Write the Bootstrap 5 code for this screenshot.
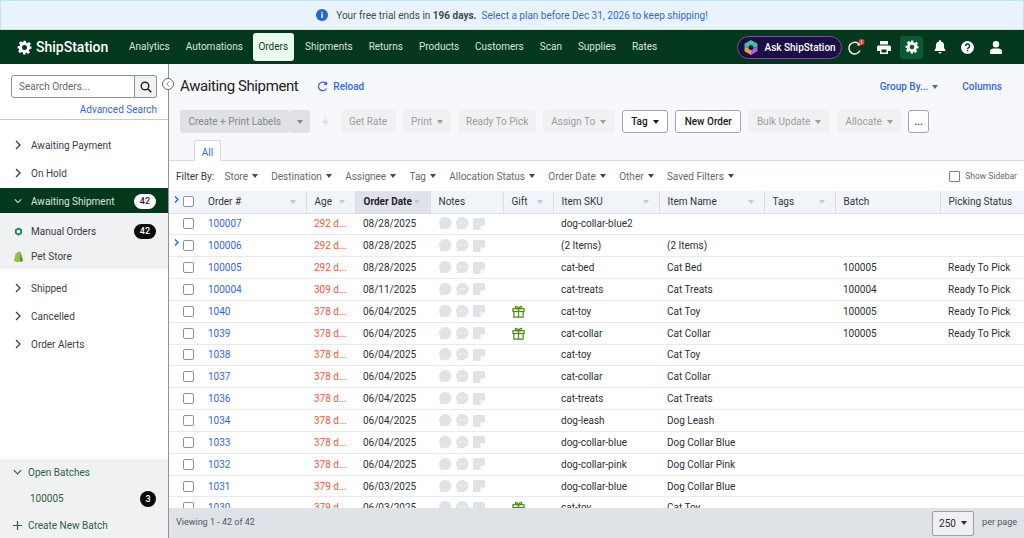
<!DOCTYPE html>
<html lang="en">
<head>
<meta charset="UTF-8">
<meta name="viewport" content="width=device-width, initial-scale=1">
<link href="https://cdn.jsdelivr.net/npm/bootstrap@5.3.2/dist/css/bootstrap.min.css" rel="stylesheet">
<script src="https://cdn.jsdelivr.net/npm/bootstrap@5.3.2/dist/js/bootstrap.bundle.min.js"></script>
<title>ShipStation - Awaiting Shipment</title>
<style>
html, body { height: 538px; overflow: hidden; }
body { font-family: Roboto, "Liberation Sans", sans-serif; font-size: 10px; color: #2b2f33; background: #fff; }
a { text-decoration: none; }
.trial-bar { height: 30px; background: #e9f3fb; border: 1px solid #c3e3f7; font-size: 10px; color: #46494d; gap: 8px; flex: none; }
.trial-bar a, .blue-link { color: #3467e0; }
.ss-nav { height: 34px; background: #03381c; padding: 0 0 0 17px; flex: none; flex-wrap: nowrap; }
.ss-brand { color: #fff; font-size: 14px; font-weight: 500; width: 106px; gap: 4px; }
.ss-links .nav-link { color: #dbe6de; font-size: 10px; padding: 0 6px; height: 28px; line-height: 28px; margin-right: 4px; border-radius: 3px; }
.ss-links .nav-link.active { background: #e9fbef; color: #0c3b22; margin: 0 5px 0 0; padding: 0 6px 0 5.500px; }
.ask-pill { width: 105px; height: 23px; border-radius: 12px; background: #1c0d45; border: 1px solid #6e5a90; color: #fff; font-size: 10px; font-weight: 500; gap: 7px; padding-left: 6px; white-space: nowrap; flex: none; }
.nav-tools { width: 28px; height: 23px; position: relative; flex: none; }
.nav-tools.current { background: #0c5a34; border-radius: 3px; width: 23px; margin: 0 2.5px; }
.nav-right { margin-right: 14.5px; }
.body-split { min-height: 0; }
.side-panel { width: 169px; flex: none; border-right: 1px solid #8f9398; background: #fff; position: relative; }
.search-box { padding: 11px 11px 0; height: 56px; border-bottom: 1px solid #c6c9cd; flex: none; }
.search-box .input-group { height: 23px; }
.search-box .form-control { font-size: 10px; padding: 0 7px; border-color: #8e9296; color: #555; border-radius: 3px 0 0 3px; min-height: 0; }
.search-box .form-control::placeholder { color: #666; }
.search-btn { width: 23px; padding: 0; background: #f0f2f4; border: 1px solid #8e9296; border-left-color: #c6c9cd; border-radius: 0 3px 3px 0; flex: none; }
.adv-link { display: block; text-align: right; margin-top: 5px; line-height: 13px; }
.collapse-dot { position: absolute; top: 14px; right: -6px; width: 12px; height: 12px; border: 1px solid #666; border-radius: 50%; background: #fff; z-index: 5; }
.side-row { height: 28px; padding-left: 14px; gap: 9px; color: #3b3e42; }
.side-row.first { margin-top: 11px; }
.side-row.selected { height: 25px; margin-top: 1px; padding-top: 1px; background: #03381c; color: #dbe6de; padding-right: 12px; }
.side-sub { background: #f0f1f3; height: 56px; padding-top: 6px; margin-bottom: 5px; }
.side-sub .side-row { height: 25px; padding-right: 12px; gap: 8px; }
.pill-count { min-width: 22px; padding: 0 6px; height: 15px; line-height: 15px; font-size: 9px; font-weight: 500; border-radius: 8px; background: #0a0a0a; color: #fff; text-align: center; }
.pill-count.round { min-width: 16px; height: 16px; line-height: 16px; padding: 0; }
.selected .pill-count { background: #fff; color: #222; }
.batch-box { height: 79px; background: #f0f1f3; flex: none; }
.batch-box .side-row { height: 26.5px; padding-right: 12px; gap: 6px; padding-left: 13px; color: #2f5f46; }
.batch-box .batch-num { padding-left: 30px; color: #2f5f46; }
.main-area { min-width: 0; background: #f7f8fb; }
.title-row { height: 45px; padding: 0 22px 0 11px; flex: none; }
.page-title { font-size: 15px; font-weight: 400; margin: 0 19px 0 0; color: #222; font-family: Roboto, sans-serif; line-height: 1; letter-spacing: -.4px; }
.reload-link { gap: 5px; }
.title-link { font-weight: 500; }
.tool-row { height: 25px; padding-left: 11px; gap: 7px; flex: none; }
.tool-btn { height: 23px; padding: 0 8.5px; font-size: 10px; border-radius: 3px; display: inline-flex; align-items: center; gap: 5px; white-space: nowrap; }
.tool-btn.off { background: #f0f1f3; border: 0; color: #9a9da1; }
.tool-btn.on { background: #fff; border: 1px solid #a3a6aa; color: #17191b; font-weight: 500; }
.tool-btn.dark-off { background: #dfe1e4; border: 0; color: #85888c; }
.tool-btn.tight { padding: 0 7.5px; }
.tool-btn.square { width: 20px; padding: 0; justify-content: center; }
.tool-btn.dots { width: 21px; padding: 0; justify-content: center; }
.split-btn { gap: 0; }
.caret-down { width: 0; height: 0; border-left: 3.5px solid transparent; border-right: 3.5px solid transparent; border-top: 4px solid currentColor; display: inline-block; flex: none; }
.tab-row { height: 27px; padding-left: 25px; border-bottom: 1px solid #d5dae4; flex: none; display: flex; align-items: flex-end; }
.tab-all { width: 27px; height: 21px; background: #fff; border: 1px solid #d5dae4; border-bottom: 0; border-radius: 3px 3px 0 0; color: #3467e0; text-align: center; line-height: 24px; margin-bottom: -1px; position: relative; }
.filter-row { height: 30px; background: #fff; padding: 0 7px; flex: none; color: #666a6e; gap: 13.3px; }
.filter-row .lead-in { color: #33363a; margin-right: -3px; }
.filter-row span.fl { display: inline-flex; align-items: center; gap: 4px; }
.filter-row .caret-down { color: #44474a; }
.side-check { font-size: 8.5px; gap: 5px; }
.side-check .form-check-input { width: 11px; height: 11px; margin: 0; border-color: #7d8186; border-radius: 1px; }
.table-wrap { flex: 1; min-height: 0; overflow: hidden; background: #fff; position: relative; }
.order-grid { table-layout: fixed; width: 855px; margin: 0; font-size: 10px; color: #2b2f33; }
.order-grid th, .order-grid td { padding: 0 0 0 8px; height: 21.85px; vertical-align: middle; white-space: nowrap; overflow: hidden; border-bottom: 1px solid #e8eaec; box-shadow: none; }
.order-grid th { height: 22px; background: #f1f4f8; font-weight: 400; border-bottom: 1px solid #d9dee5; border-right: 1px solid #d9dee5; position: relative; color: #33363a; }
.order-grid th.sorted { background: #dfe3e9; font-weight: 700; color: #1f2124; }
.order-grid th .caret-down { position: absolute; right: 10px; top: 9px; color: #c5c9ce; }
.order-grid th.chk-cell { border-right: 0; }
.order-grid .chk-cell { padding-left: 14px; }
.order-grid .form-check-input { width: 11px; height: 11px; margin: 0; border: 1px solid #8d9298; border-radius: 2px; display: block; }
.order-grid td a { color: #3467e0; }
.age-late { color: #f0563a; }
.cw-chk { width: 31px; } .cw-ord { width: 106px; } .cw-age { width: 49px; } .cw-date { width: 75px; }
.cw-notes { width: 73px; } .cw-gift { width: 50px; } .cw-sku { width: 106px; } .cw-name { width: 105px; }
.cw-tags { width: 71px; } .cw-batch { width: 105px; } .cw-pick { width: 84px; }
.row-arrow { position: absolute; left: 5px; width: 5px; height: 7px; z-index: 2; }
.arrow-head { top: 5px; }
.arrow-two { top: 48px; }
.note-icons { display: flex; gap: 4px; align-items: center; margin-left: 1px; }
.gift-icon { margin-left: 1px; display: block; }
.grid-foot { height: 30px; background: #dfe2e6; padding: 0 7px; color: #53575b; flex: none; font-size: 9px; }
.page-select { width: 42px; height: 25px; border: 1px solid #9b9ea2; border-radius: 2px; background: #eef0f2; padding: 0 6px; color: #2a2c2f; margin-right: 8px; justify-content: space-between; font-size: 10px; }
</style>
</head>
<body class="d-flex flex-column">
<svg width="0" height="0" class="position-absolute">
  <symbol id="gear" viewBox="0 0 24 24"><path fill="currentColor" fill-rule="evenodd" d="M10 1h4l.7 3.2 1.9.8 2.8-1.8 2.8 2.8-1.8 2.8.8 1.9L23 10v4l-3.2.7-.8 1.9 1.8 2.8-2.8 2.8-2.8-1.8-1.9.8L14 23h-4l-.7-3.2-1.9-.8-2.8 1.8-2.8-2.8 1.8-2.8-.8-1.9L1 14v-4l3.2-.7.8-1.9-1.800-2.800 2.800-2.800 2.800 1.800 1.900-.8zM12 8a4 4 0 1 0 0 8 4 4 0 0 0 0-8z"/></symbol>
  <symbol id="ring" viewBox="0 0 24 24"><path fill="currentColor" fill-rule="evenodd" d="M12 1l9.500 5.500v11L12 23l-9.500-5.500v-11zM12 7a5 5 0 1 0 0 10 5 5 0 0 0 0-10z"/></symbol>
  <symbol id="chev-r" viewBox="0 0 8 10"><path d="M2 1l4 4-4 4" fill="none" stroke="currentColor" stroke-width="1.300"/></symbol>
  <symbol id="chev-d" viewBox="0 0 10 8"><path d="M1 2l4 4 4-4" fill="none" stroke="currentColor" stroke-width="1.300"/></symbol>
  <symbol id="bubble" viewBox="0 0 14 14"><path fill="#dfe2e6" d="M7 0a6.500 6.500 0 1 1-2.800 12.400L.8 13.800l1-3A6.500 6.500 0 0 1 7 0z"/></symbol>
  <symbol id="bubble-dots" viewBox="0 0 14 14"><path fill="#dfe2e6" d="M7 0a6.500 6.500 0 1 1-2.800 12.400L.8 13.800l1-3A6.500 6.500 0 0 1 7 0z"/><circle cx="4.300" cy="6.500" r=".8" fill="#fff"/><circle cx="7" cy="6.500" r=".8" fill="#fff"/><circle cx="9.700" cy="6.500" r=".8" fill="#fff"/></symbol>
  <symbol id="sticky" viewBox="0 0 12 12"><path fill="#dfe2e6" d="M1.500 0h9A1.500 1.500 0 0 1 12 1.500V7l-5 5H1.500A1.500 1.500 0 0 1 0 10.500v-9A1.500 1.500 0 0 1 1.500 0z"/><path fill="#fff" d="M7.500 11V7.500H11V8L8 11z"/></symbol>
  <symbol id="gift" viewBox="0 0 14 14"><g fill="none" stroke="#4f8a10" stroke-width="1.300"><rect x="1" y="4" width="12" height="3"/><path d="M2 7v6h10V7M7 4v9M7 4C5 4 3.500 3.500 3.500 2.200 3.500 1 5.500.6 7 4zM7 4c2 0 3.500-.5 3.500-1.800C10.500 1 8.500.6 7 4z"/></g></symbol>
</svg>

<div class="trial-bar d-flex align-items-center justify-content-center">
  <svg width="12" height="12" viewBox="0 0 12 12"><circle cx="6" cy="6" r="6" fill="#2463d8"/><rect x="5.300" y="5" width="1.500" height="4" fill="#fff"/><rect x="5.300" y="2.800" width="1.500" height="1.500" fill="#fff"/></svg>
  <span>Your free trial ends in <b>196 days.</b>&nbsp; <a href="#">Select a plan before Dec 31, 2026 to keep shipping!</a></span>
</div>

<nav class="navbar ss-nav d-flex align-items-center">
  <a class="d-flex align-items-center ss-brand" href="#"><svg width="15" height="15"><use href="#gear"/></svg>ShipStation</a>
  <div class="nav ss-links align-items-center flex-nowrap">
    <a class="nav-link" href="#">Analytics</a>
    <a class="nav-link" href="#">Automations</a>
    <a class="nav-link active" href="#">Orders</a>
    <a class="nav-link" href="#">Shipments</a>
    <a class="nav-link" href="#">Returns</a>
    <a class="nav-link" href="#">Products</a>
    <a class="nav-link" href="#">Customers</a>
    <a class="nav-link" href="#">Scan</a>
    <a class="nav-link" href="#">Supplies</a>
    <a class="nav-link" href="#">Rates</a>
  </div>
  <div class="ms-auto d-flex align-items-center text-white nav-right">
    <div class="ask-pill d-flex align-items-center">
      <svg width="14" height="15" viewBox="0 0 14 15"><path fill="#35c8a0" d="M7 0l6.500 3.700v3.800H9.500a2.500 2.500 0 0 0-5 0H.5V3.700z"/><path fill="#e8a13c" d="M.5 7.500h4a2.500 2.500 0 0 0 2.500 2.500v5L.5 11.300z"/><path fill="#b05cd6" d="M13.500 7.500h-4A2.500 2.500 0 0 1 7 10v5l6.500-3.700z"/></svg>
      Ask ShipStation
    </div>
    <div class="nav-tools d-flex align-items-center justify-content-center">
      <svg width="18" height="17" viewBox="0 0 18 17"><path d="M13 11.500A5.800 5.800 0 1 1 11.800 5" fill="none" stroke="#fff" stroke-width="1.400"/><path d="M13.300 3v3.500H9.800z" fill="#fff"/><circle cx="14.500" cy="3" r="3" fill="#ea4b2c"/><rect x="14.100" y="1.300" width=".8" height="2.200" fill="#fff"/><rect x="14.100" y="3.900" width=".8" height=".8" fill="#fff"/></svg>
    </div>
    <div class="nav-tools d-flex align-items-center justify-content-center">
      <svg width="14" height="13" viewBox="0 0 14 13"><path fill="#fff" fill-rule="evenodd" d="M3 0h8v3.500H3zM1.500 4.500h11A1.500 1.500 0 0 1 14 6v4h-3v3H3v-3H0V6a1.500 1.500 0 0 1 1.500-1.500zM4.500 8.500V11.500h5V8.500z"/></svg>
    </div>
    <div class="nav-tools current d-flex align-items-center justify-content-center"><svg width="14" height="14"><use href="#gear"/></svg></div>
    <div class="nav-tools d-flex align-items-center justify-content-center">
      <svg width="12" height="14" viewBox="0 0 12 14"><path fill="#fff" d="M6 0a1 1 0 0 1 1 1v.6A4 4 0 0 1 10 5.500c0 3 .6 4 2 5.500H0c1.400-1.500 2-2.500 2-5.500A4 4 0 0 1 5 1.600V1a1 1 0 0 1 1-1zM4.500 12h3a1.500 1.500 0 0 1-3 0z"/></svg>
    </div>
    <div class="nav-tools d-flex align-items-center justify-content-center">
      <svg width="13" height="13" viewBox="0 0 13 13"><circle cx="6.500" cy="6.500" r="6.500" fill="#fff"/><path d="M4.600 5a2 2 0 1 1 2.800 1.800c-.6.300-.9.600-.9 1.300" fill="none" stroke="#03381c" stroke-width="1.400"/><rect x="5.800" y="9" width="1.400" height="1.400" fill="#03381c"/></svg>
    </div>
    <div class="nav-tools d-flex align-items-center justify-content-center">
      <svg width="12" height="13" viewBox="0 0 12 13"><circle cx="6" cy="3.300" r="3.200" fill="#fff"/><path fill="#fff" d="M0 13v-2.500C0 8.500 2 7.500 3.500 7.500h5c1.500 0 3.500 1 3.500 3V13z"/></svg>
    </div>
  </div>
</nav>

<div class="d-flex flex-grow-1 body-split">
  <aside class="side-panel d-flex flex-column">
    <span class="collapse-dot d-flex align-items-center justify-content-center"><svg width="6" height="6" viewBox="0 0 8 10" class="text-secondary"><path d="M6 1L2 5l4 4" fill="none" stroke="currentColor" stroke-width="1.500"/></svg></span>
    <div class="search-box">
      <div class="input-group flex-nowrap">
        <input class="form-control" type="text" placeholder="Search Orders...">
        <button class="search-btn d-flex align-items-center justify-content-center" type="button">
          <svg width="12" height="12" viewBox="0 0 12 12"><circle cx="5" cy="5" r="3.800" fill="none" stroke="#222" stroke-width="1.400"/><path d="M8 8l3.300 3.300" stroke="#222" stroke-width="1.600"/></svg>
        </button>
      </div>
      <a class="adv-link blue-link" href="#">Advanced Search</a>
    </div>
    <div class="side-row first d-flex align-items-center"><svg width="8" height="10"><use href="#chev-r"/></svg>Awaiting Payment</div>
    <div class="side-row d-flex align-items-center"><svg width="8" height="10"><use href="#chev-r"/></svg>On Hold</div>
    <div class="side-row selected d-flex align-items-center"><svg width="8" height="10"><use href="#chev-d"/></svg>Awaiting Shipment<span class="pill-count ms-auto">42</span></div>
    <div class="side-sub">
      <div class="side-row d-flex align-items-center"><svg width="9" height="9" class="text-success"><use href="#ring"/></svg>Manual Orders<span class="pill-count ms-auto">42</span></div>
      <div class="side-row d-flex align-items-center"><svg width="9" height="11" viewBox="0 0 9 11"><path fill="#95bf47" d="M1.500 2.500L3 2C3.500.5 5 0 6 .8L7 1.500 9 10l-6.500 1L0 10z"/><path fill="#5e8e3e" d="M6.500 1.500L9 10l-3 1z"/></svg>Pet Store</div>
    </div>
    <div class="side-row d-flex align-items-center"><svg width="8" height="10"><use href="#chev-r"/></svg>Shipped</div>
    <div class="side-row d-flex align-items-center"><svg width="8" height="10"><use href="#chev-r"/></svg>Cancelled</div>
    <div class="side-row d-flex align-items-center"><svg width="8" height="10"><use href="#chev-r"/></svg>Order Alerts</div>
    <div class="batch-box mt-auto">
      <div class="side-row d-flex align-items-center"><svg width="9" height="8"><use href="#chev-d"/></svg>Open Batches</div>
      <div class="side-row batch-num d-flex align-items-center"><span>100005</span><span class="pill-count round ms-auto">3</span></div>
      <div class="side-row d-flex align-items-center"><svg width="9" height="9" viewBox="0 0 9 9"><path d="M4.500 0v9M0 4.500h9" stroke="currentColor" stroke-width="1.200"/></svg>Create New Batch</div>
    </div>
  </aside>

  <main class="main-area flex-grow-1 d-flex flex-column">
    <div class="title-row d-flex align-items-center">
      <h1 class="page-title">Awaiting Shipment</h1>
      <a class="blue-link reload-link title-link d-flex align-items-center" href="#"><svg width="11" height="11" viewBox="0 0 11 11"><path d="M9.500 7.500A4.300 4.300 0 1 1 8.800 2.300M9.500.8v2.500H7" fill="none" stroke="#3467e0" stroke-width="1.300"/></svg>Reload</a>
      <a class="blue-link title-link ms-auto d-flex align-items-center gap-1" href="#">Group By... <span class="caret-down"></span></a>
      <a class="blue-link title-link ms-4" href="#">Columns</a>
    </div>
    <div class="tool-row d-flex align-items-center">
      <div class="split-btn d-flex">
        <button class="btn tool-btn dark-off">Create + Print Labels</button>
        <button class="btn tool-btn dark-off square"><span class="caret-down"></span></button>
      </div>
      <svg width="9" height="12" viewBox="0 0 10 12" class="mx-1"><path fill="#dfe1e4" d="M6 0L1 7h3l-1 5 6-7H5.500z"/></svg>
      <button class="btn tool-btn off">Get Rate</button>
      <button class="btn tool-btn off">Print <span class="caret-down"></span></button>
      <button class="btn tool-btn off tight">Ready To Pick</button>
      <button class="btn tool-btn off">Assign To <span class="caret-down"></span></button>
      <button class="btn tool-btn on">Tag <span class="caret-down"></span></button>
      <button class="btn tool-btn on">New Order</button>
      <button class="btn tool-btn off">Bulk Update <span class="caret-down"></span></button>
      <button class="btn tool-btn off">Allocate <span class="caret-down"></span></button>
      <button class="btn tool-btn on dots">...</button>
    </div>
    <div class="tab-row"><a class="tab-all" href="#">All</a></div>
    <div class="filter-row d-flex align-items-center">
      <span class="lead-in">Filter By:</span>
      <span class="fl">Store <i class="caret-down"></i></span>
      <span class="fl">Destination <i class="caret-down"></i></span>
      <span class="fl">Assignee <i class="caret-down"></i></span>
      <span class="fl">Tag <i class="caret-down"></i></span>
      <span class="fl">Allocation Status <i class="caret-down"></i></span>
      <span class="fl">Order Date <i class="caret-down"></i></span>
      <span class="fl">Other <i class="caret-down"></i></span>
      <span class="fl">Saved Filters <i class="caret-down"></i></span>
      <label class="side-check ms-auto d-flex align-items-center"><input class="form-check-input" type="checkbox">Show Sidebar</label>
    </div>
    <div class="table-wrap">
      <svg class="row-arrow arrow-head" viewBox="0 0 5 7"><path d="M1 .5l3 3-3 3" fill="none" stroke="#2463d8" stroke-width="1.300"/></svg>
      <svg class="row-arrow arrow-two" viewBox="0 0 5 7"><path d="M1 .5l3 3-3 3" fill="none" stroke="#2463d8" stroke-width="1.300"/></svg>
      <table class="table order-grid">
        <colgroup>
          <col class="cw-chk"><col class="cw-ord"><col class="cw-age"><col class="cw-date"><col class="cw-notes"><col class="cw-gift"><col class="cw-sku"><col class="cw-name"><col class="cw-tags"><col class="cw-batch"><col class="cw-pick">
        </colgroup>
        <thead>
          <tr>
            <th class="chk-cell"><input class="form-check-input" type="checkbox"></th>
            <th>Order #<span class="caret-down"></span></th>
            <th>Age<span class="caret-down"></span></th>
            <th class="sorted">Order Date<span class="caret-down"></span></th>
            <th>Notes</th>
            <th>Gift<span class="caret-down"></span></th>
            <th>Item SKU<span class="caret-down"></span></th>
            <th>Item Name<span class="caret-down"></span></th>
            <th>Tags<span class="caret-down"></span></th>
            <th>Batch</th>
            <th>Picking Status</th>
          </tr>
        </thead>
        <tbody id="orderRows"></tbody>
      </table>
    </div>
    <div class="grid-foot d-flex align-items-center">
      <span>Viewing 1 - 42 of 42</span>
      <div class="page-select ms-auto d-flex align-items-center">250 <span class="caret-down"></span></div>
      <span>per page</span>
    </div>
  </main>
</div>

<script>
  const orders = [
    ['100007', '292 d...', '08/28/2025', 0, 'dog-collar-blue2', '', '', ''],
    ['100006', '292 d...', '08/28/2025', 0, '(2 Items)', '(2 Items)', '', ''],
    ['100005', '292 d...', '08/28/2025', 0, 'cat-bed', 'Cat Bed', '100005', 'Ready To Pick'],
    ['100004', '309 d...', '08/11/2025', 0, 'cat-treats', 'Cat Treats', '100004', 'Ready To Pick'],
    ['1040', '378 d...', '06/04/2025', 1, 'cat-toy', 'Cat Toy', '100005', 'Ready To Pick'],
    ['1039', '378 d...', '06/04/2025', 1, 'cat-collar', 'Cat Collar', '100005', 'Ready To Pick'],
    ['1038', '378 d...', '06/04/2025', 0, 'cat-toy', 'Cat Toy', '', ''],
    ['1037', '378 d...', '06/04/2025', 0, 'cat-collar', 'Cat Collar', '', ''],
    ['1036', '378 d...', '06/04/2025', 0, 'cat-treats', 'Cat Treats', '', ''],
    ['1034', '378 d...', '06/04/2025', 0, 'dog-leash', 'Dog Leash', '', ''],
    ['1033', '378 d...', '06/04/2025', 0, 'dog-collar-blue', 'Dog Collar Blue', '', ''],
    ['1032', '378 d...', '06/04/2025', 0, 'dog-collar-pink', 'Dog Collar Pink', '', ''],
    ['1031', '379 d...', '06/03/2025', 0, 'dog-collar-blue', 'Dog Collar Blue', '', ''],
    ['1030', '379 d...', '06/03/2025', 1, 'cat-toy', 'Cat Toy', '', '']
  ];
  const noteIcons = `<div class="note-icons"><svg width="13" height="13"><use href="#bubble"/></svg><svg width="13" height="13"><use href="#bubble-dots"/></svg><svg width="12" height="12"><use href="#sticky"/></svg></div>`;
  document.getElementById('orderRows').innerHTML = orders.map(o => `<tr>
    <td class="chk-cell"><input class="form-check-input" type="checkbox"></td>
    <td><a href="#">${o[0]}</a></td>
    <td class="age-late">${o[1]}</td>
    <td>${o[2]}</td>
    <td>${noteIcons}</td>
    <td>${o[3] ? '<svg class="gift-icon" width="13" height="13"><use href="#gift"/></svg>' : ''}</td>
    <td>${o[4]}</td><td>${o[5]}</td><td></td><td>${o[6]}</td><td>${o[7]}</td>
  </tr>`).join('');
</script>
</body>
</html>
